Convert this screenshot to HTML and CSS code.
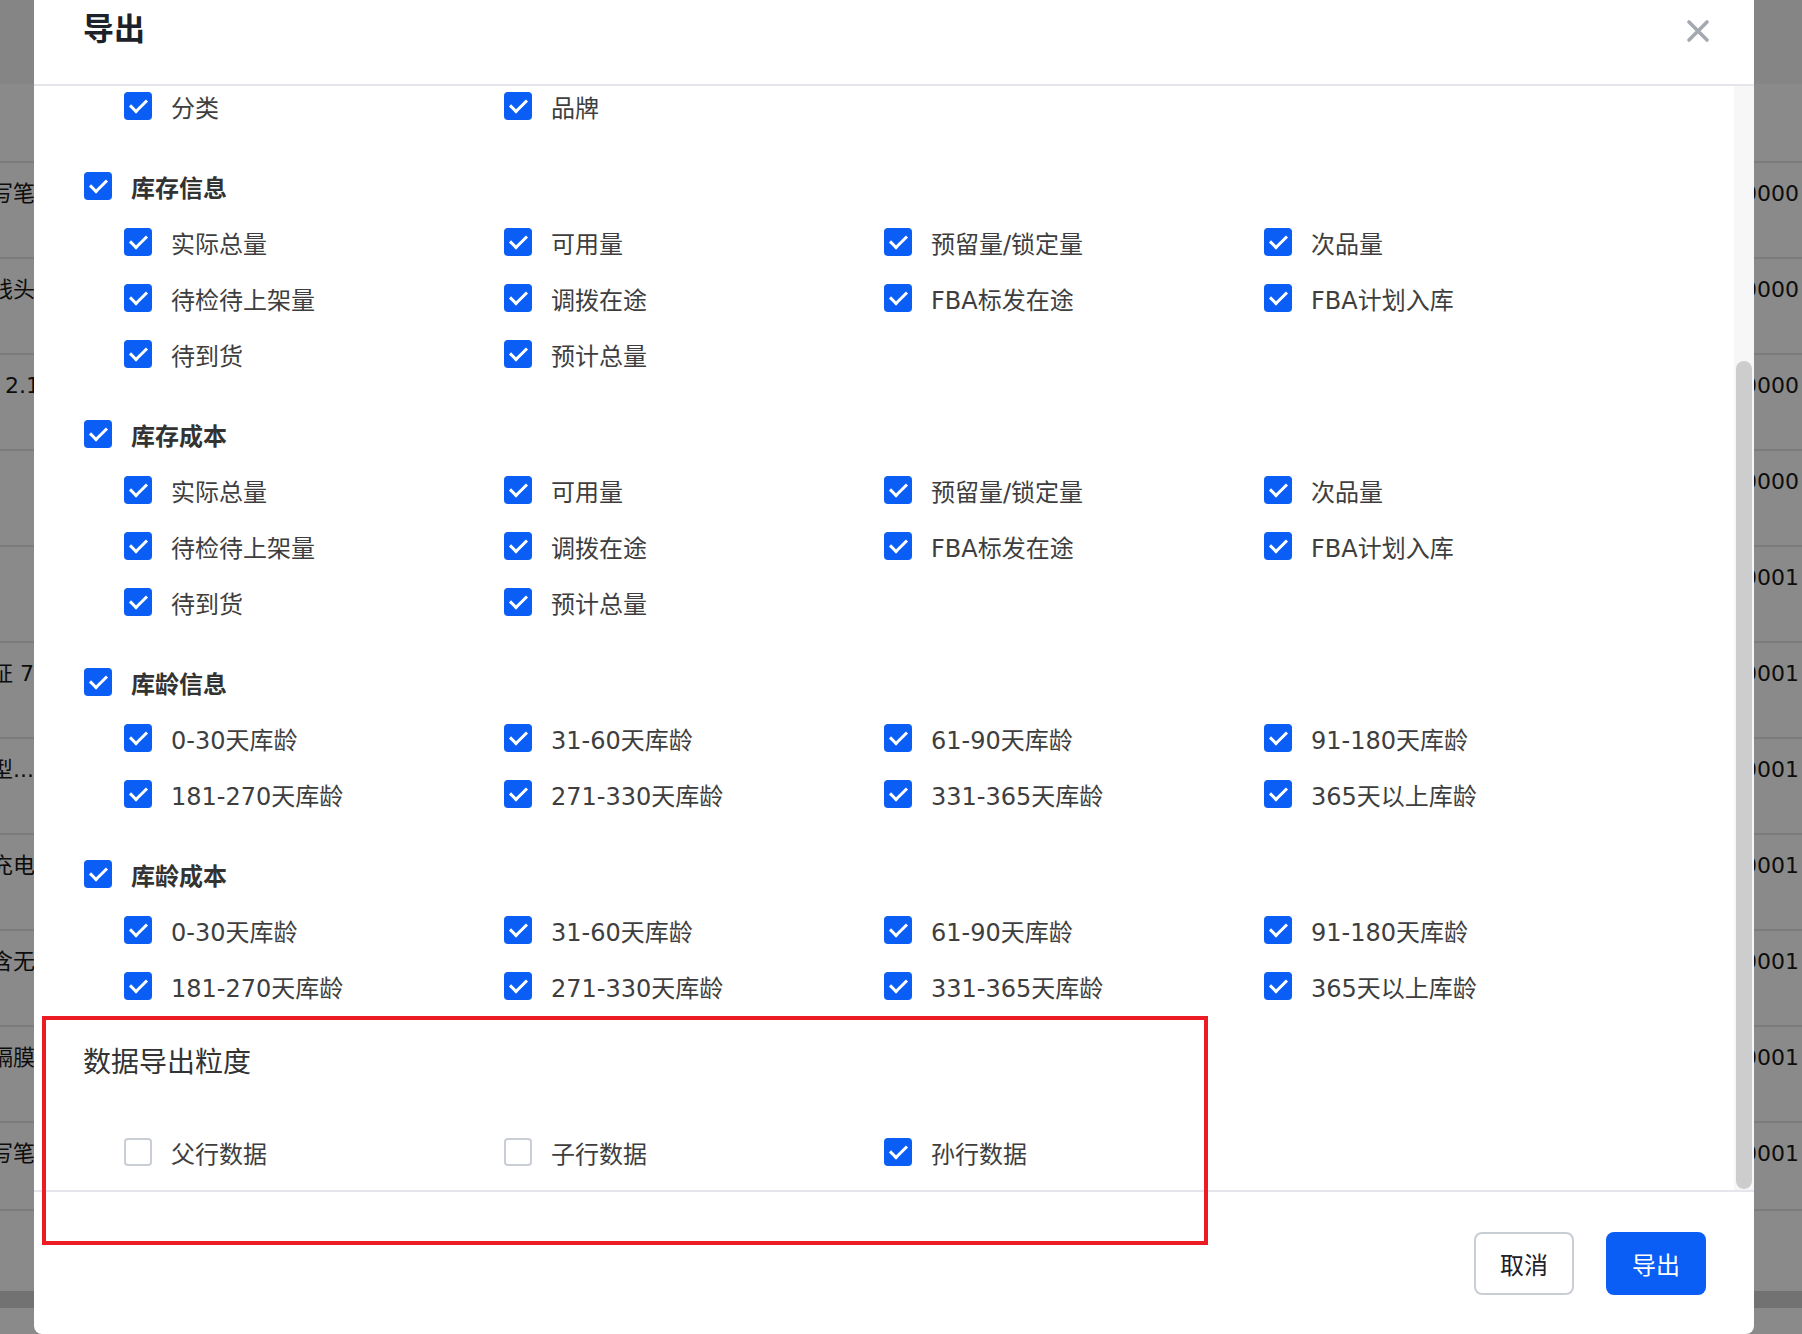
FILE: index.html
```html
<!DOCTYPE html>
<html lang="zh-CN">
<head>
    <meta charset="UTF-8">
    <meta name="viewport" content="width=device-width, initial-scale=1.0">
    <title>导出</title>
    <link rel="stylesheet" href="styles.css">
</head>
<body>
    <!-- table behind the dialog, dimmed by the overlay -->
    <div class="backdrop">
        <div class="bg-head"></div>
        <div class="bg-row first"></div>
        <div class="bg-row"><div class="bg-left"><span>写笔</span></div><div class="bg-right">0000</div></div>
        <div class="bg-row"><div class="bg-left"><span>线头</span></div><div class="bg-right">0000</div></div>
        <div class="bg-row"><div class="bg-left"><span>  2.1</span></div><div class="bg-right">0000</div></div>
        <div class="bg-row"><div class="bg-left"><span></span></div><div class="bg-right">0000</div></div>
        <div class="bg-row"><div class="bg-left"><span></span></div><div class="bg-right">0001</div></div>
        <div class="bg-row"><div class="bg-left"><span>证 7</span></div><div class="bg-right">0001</div></div>
        <div class="bg-row"><div class="bg-left"><span>型...</span></div><div class="bg-right">0001</div></div>
        <div class="bg-row"><div class="bg-left"><span>充电</span></div><div class="bg-right">0001</div></div>
        <div class="bg-row"><div class="bg-left"><span>含无</span></div><div class="bg-right">0001</div></div>
        <div class="bg-row"><div class="bg-left"><span>隔膜</span></div><div class="bg-right">0001</div></div>
        <div class="bg-row short"><div class="bg-left"><span>写笔</span></div><div class="bg-right">0001</div></div>
        <div class="bg-gap"></div>
        <div class="bg-scroll"></div>
    </div>

    <div class="modal">
        <div class="modal-header">
            <div class="modal-title">导出</div>
            <svg class="close" viewBox="0 0 24 24">
                <path d="M3 3 L21 21 M21 3 L3 21" stroke="#a4a8b0" stroke-width="3.6" stroke-linecap="round" fill="none"/>
            </svg>
        </div>

        <div class="modal-body">
            <div class="content">
                <div class="list">
                    <div class="group">
                        <div class="items">
                            <label class="item"><span class="cb"></span>分类</label>
                            <label class="item"><span class="cb"></span>品牌</label>
                        </div>
                    </div>

                    <div class="group">
                        <label class="group-head"><span class="cb"></span>库存信息</label>
                        <div class="items">
                            <label class="item"><span class="cb"></span>实际总量</label>
                            <label class="item"><span class="cb"></span>可用量</label>
                            <label class="item"><span class="cb"></span>预留量/锁定量</label>
                            <label class="item"><span class="cb"></span>次品量</label>
                            <label class="item"><span class="cb"></span>待检待上架量</label>
                            <label class="item"><span class="cb"></span>调拨在途</label>
                            <label class="item"><span class="cb"></span>FBA标发在途</label>
                            <label class="item"><span class="cb"></span>FBA计划入库</label>
                            <label class="item"><span class="cb"></span>待到货</label>
                            <label class="item"><span class="cb"></span>预计总量</label>
                        </div>
                    </div>

                    <div class="group">
                        <label class="group-head"><span class="cb"></span>库存成本</label>
                        <div class="items">
                            <label class="item"><span class="cb"></span>实际总量</label>
                            <label class="item"><span class="cb"></span>可用量</label>
                            <label class="item"><span class="cb"></span>预留量/锁定量</label>
                            <label class="item"><span class="cb"></span>次品量</label>
                            <label class="item"><span class="cb"></span>待检待上架量</label>
                            <label class="item"><span class="cb"></span>调拨在途</label>
                            <label class="item"><span class="cb"></span>FBA标发在途</label>
                            <label class="item"><span class="cb"></span>FBA计划入库</label>
                            <label class="item"><span class="cb"></span>待到货</label>
                            <label class="item"><span class="cb"></span>预计总量</label>
                        </div>
                    </div>

                    <div class="group">
                        <label class="group-head"><span class="cb"></span>库龄信息</label>
                        <div class="items">
                            <label class="item"><span class="cb"></span>0-30天库龄</label>
                            <label class="item"><span class="cb"></span>31-60天库龄</label>
                            <label class="item"><span class="cb"></span>61-90天库龄</label>
                            <label class="item"><span class="cb"></span>91-180天库龄</label>
                            <label class="item"><span class="cb"></span>181-270天库龄</label>
                            <label class="item"><span class="cb"></span>271-330天库龄</label>
                            <label class="item"><span class="cb"></span>331-365天库龄</label>
                            <label class="item"><span class="cb"></span>365天以上库龄</label>
                        </div>
                    </div>

                    <div class="group">
                        <label class="group-head"><span class="cb"></span>库龄成本</label>
                        <div class="items">
                            <label class="item"><span class="cb"></span>0-30天库龄</label>
                            <label class="item"><span class="cb"></span>31-60天库龄</label>
                            <label class="item"><span class="cb"></span>61-90天库龄</label>
                            <label class="item"><span class="cb"></span>91-180天库龄</label>
                            <label class="item"><span class="cb"></span>181-270天库龄</label>
                            <label class="item"><span class="cb"></span>271-330天库龄</label>
                            <label class="item"><span class="cb"></span>331-365天库龄</label>
                            <label class="item"><span class="cb"></span>365天以上库龄</label>
                        </div>
                    </div>

                    <div class="granularity">
                        <div class="section-title">数据导出粒度</div>
                        <div class="items">
                            <label class="item"><span class="cb off"></span>父行数据</label>
                            <label class="item"><span class="cb off"></span>子行数据</label>
                            <label class="item"><span class="cb"></span>孙行数据</label>
                        </div>
                    </div>
                </div>
            </div>
            <div class="scrollbar"><div class="thumb"></div></div>
        </div>

        <div class="modal-footer">
            <button class="btn">取消</button>
            <button class="btn btn-primary">导出</button>
        </div>
    </div>

    <!-- annotation frame -->
    <div class="mark"></div>
</body>
</html>
```

FILE: styles.css
```css
* {
    box-sizing: border-box;
}
html, body {
    margin: 0;
    height: 100%;
    overflow: hidden;
}
body {
    background: #8a8a8a;
    font-family: "Noto Sans", "Noto Sans CJK SC", sans-serif;
}

/* dimmed table */
.backdrop {
    font-family: "DejaVu Sans", "Noto Sans CJK SC", sans-serif;
    font-size: 22px;
    color: #0d0d0d;
}
.bg-head {
    height: 84px;
    background: #858585;
}
.bg-row {
    display: flex;
    justify-content: space-between;
    height: 96px;
    padding-top: 17px;
    line-height: 28px;
    white-space: pre;
    border-bottom: 2px solid #7b7b7b;
}
.bg-row.first {
    height: 79px;
}
.bg-row.short {
    height: 88px;
}
.bg-left {
    width: 34px;
    overflow: hidden;
}
.bg-left span {
    display: block;
    margin-left: -9px;
}
.bg-right {
    width: 59px;
}
.bg-gap {
    height: 80px;
}
.bg-scroll {
    height: 17px;
    background: #727272;
}

/* dialog */
.modal {
    position: absolute;
    left: 34px;
    top: -28px;
    width: 1720px;
    height: 1362px;
    background: #fff;
    border-radius: 8px;
    display: flex;
    flex-direction: column;
    overflow: hidden;
}
.modal-header {
    flex: none;
    height: 114px;
    border-bottom: 2px solid #e5e6eb;
    display: flex;
    align-items: center;
    justify-content: space-between;
    padding: 0 44px 0 49px;
}
.modal-title {
    font-size: 31px;
    font-weight: 700;
    line-height: 40px;
    color: #1d2129;
}
.close {
    width: 24px;
    height: 24px;
    margin-top: 6px;
}
.modal-body {
    flex: 1;
    min-height: 0;
    display: flex;
}
.content {
    flex: 1;
    overflow: hidden;
    font-family: "DejaVu Sans", "Noto Sans CJK SC", sans-serif;
    font-size: 24px;
}
.scrollbar {
    width: 20px;
    background: #f7f7f7;
    display: flex;
    flex-direction: column;
    padding: 275px 2px 1px;
}
.thumb {
    flex: 1;
    background: #cdcdcd;
    border-radius: 8px;
}

.list {
    margin-top: -8px;
}
.group {
    margin-bottom: 24px;
}
.group-head {
    height: 56px;
    display: flex;
    align-items: center;
    gap: 19px;
    padding-left: 50px;
    font-weight: 700;
    color: #333;
}
.items {
    display: grid;
    grid-template-columns: repeat(4, 380px);
    grid-auto-rows: 56px;
    padding-left: 90px;
}
.item {
    display: flex;
    align-items: center;
    gap: 19px;
    color: #3e3e3e;
    white-space: nowrap;
}
.cb {
    flex: none;
    width: 28px;
    height: 28px;
    border-radius: 4px;
    background: #0b5ef5;
    display: flex;
    align-items: center;
    justify-content: center;
}
.cb::after {
    content: "";
    width: 14px;
    height: 7px;
    margin-top: -4px;
    border-left: 3px solid #fff;
    border-bottom: 3px solid #fff;
    transform: rotate(-45deg);
}
.cb.off {
    background: #fff;
    border: 2px solid #c9cdd4;
}
.cb.off::after {
    display: none;
}

.granularity {
    padding-top: 7px;
}
.section-title {
    padding-left: 49px;
    font-size: 28px;
    line-height: 36px;
    color: #333;
}
.granularity .items {
    margin-top: 43px;
}

.modal-footer {
    flex: none;
    height: 144px;
    border-top: 2px solid #e5e6eb;
    display: flex;
    justify-content: flex-end;
    align-items: center;
    gap: 32px;
    padding-right: 48px;
}
.btn {
    width: 100px;
    height: 63px;
    border-radius: 8px;
    border: 2px solid #c9cdd4;
    background: #fff;
    color: #1d2129;
    font-family: "Noto Sans CJK SC", sans-serif;
    font-size: 24px;
}
.btn-primary {
    border: none;
    background: #0b5ef5;
    color: #fff;
}

.mark {
    position: absolute;
    left: 42px;
    top: 1016px;
    width: 1166px;
    height: 229px;
    border: 4px solid #ec1c24;
}
```
